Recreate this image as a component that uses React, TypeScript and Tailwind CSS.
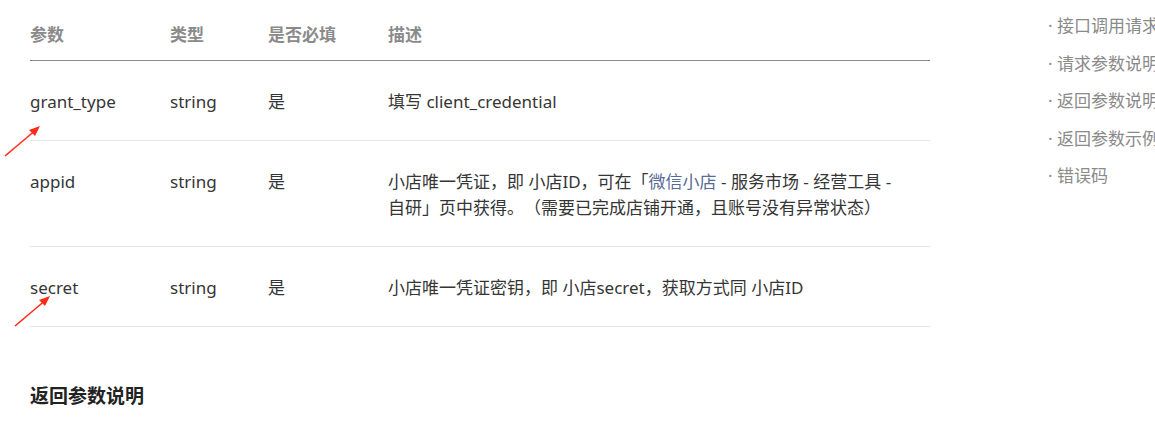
const rows = [
  { name: "grant_type", type: "string", required: "是", desc: <>填写 client_credential</> },
  {
    name: "appid",
    type: "string",
    required: "是",
    desc: (
      <>
        小店唯一凭证，即 小店ID，可在「<span className="text-[#576b95]">微信小店</span> - 服务市场 - 经营工具 - 自研」页中获得。（需要已完成店铺开通，且账号没有异常状态）
      </>
    ),
  },
  { name: "secret", type: "string", required: "是", desc: <>小店唯一凭证密钥，即 小店secret，获取方式同 小店ID</> },
];

const nav = ["接口调用请求说明", "请求参数说明", "返回参数说明", "返回参数示例", "错误码"];

function Arrow({ className }: { className: string }) {
  return (
    <svg className={className} width="40" height="34" viewBox="0 0 40 34" fill="none">
      <line x1="2" y1="32" x2="34" y2="5" stroke="#ff2a1a" strokeWidth="1.6" />
      <path d="M37 2 L26 6 L32 12 Z" fill="#ff2a1a" />
    </svg>
  );
}

export default function App() {
  return (
    <div className="relative h-[445px] w-[1155px] overflow-hidden bg-white font-['Noto_Sans','Noto_Sans_CJK_SC',sans-serif] text-[17px] text-[#353535] [text-spacing-trim:space-all]">
      <div className="flex">
        <div className="ml-[30px] w-[900px] shrink-0">
          <div className="grid h-[61px] grid-cols-[140px_98px_120px_1fr] border-b border-[#8c8c8c] pt-[22px] font-bold leading-[26px] text-[#8a8a8a]">
            <div>参数</div>
            <div>类型</div>
            <div>是否必填</div>
            <div>描述</div>
          </div>
          {rows.map((r) => (
            <div
              key={r.name}
              className="grid grid-cols-[140px_98px_120px_1fr] border-b border-[#e6e6e6] pt-[28px] pb-[25px] leading-[26px]"
            >
              <div>{r.name}</div>
              <div>{r.type}</div>
              <div>{r.required}</div>
              <div className="pr-[24px]">{r.desc}</div>
            </div>
          ))}
          <h3 className="mt-[56px] text-[19px] font-bold leading-[26px] text-[#222]">返回参数说明</h3>
        </div>
        <ul className="ml-[118px] mt-[7px] whitespace-nowrap leading-[37.5px] text-[#8a8a8a]">
          {nav.map((n) => (
            <li key={n}>· {n}</li>
          ))}
        </ul>
      </div>
      <Arrow className="absolute left-[3px] top-[124px]" />
      <Arrow className="absolute left-[13px] top-[294px]" />
    </div>
  );
}
